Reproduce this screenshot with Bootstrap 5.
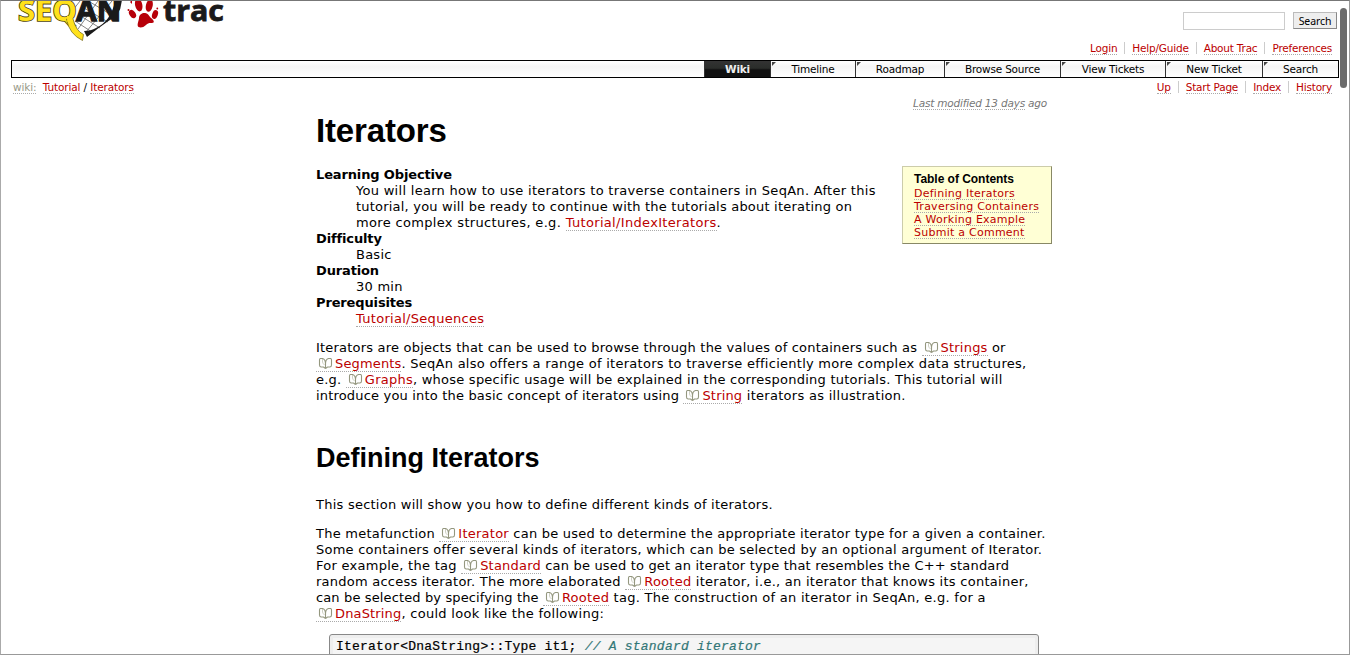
<!DOCTYPE html>
<html lang="en">
<head>
<meta charset="utf-8">
<title>Iterators</title>
<link href="https://cdn.jsdelivr.net/npm/bootstrap@5.3.0/dist/css/bootstrap.min.css" rel="stylesheet">
<style>
html,body{height:655px;overflow:hidden}
body{font-family:"DejaVu Sans",Verdana,sans-serif;font-size:13px;line-height:16px;color:#000;background:#fff}
.page-frame{height:655px;border:1px solid #777;border-left-color:#aaa;border-right-color:#999;border-bottom-color:#999}
a{color:#b00;text-decoration:none;border-bottom:1px dotted #aaa}
a:hover{color:#b00}
.masthead{height:59px;padding:0 13px 0 10px}
.logo-text{font-family:"Open Sans","Noto Sans",sans-serif;font-weight:700;font-size:29px}
.search-form{margin:11px -1px 12px 0}
.search-text{width:102px;height:18px;border:1px solid #ccc;padding:0;margin-right:8px}
.search-btn{width:44px;height:17px;border:1px solid #bbb;border-right-color:#888;border-bottom-color:#888;background:#eee;font:10.5px/14px "Noto Sans",sans-serif;letter-spacing:-.1px;padding:0;color:#000}
.linkbar{font-size:10.5px;line-height:12px;letter-spacing:-.2px}
.linkbar span{padding-left:7px}
.linkbar span+span{border-left:1px solid #ccc;margin-left:7px}
.linkbar a,.trail a{display:inline-block;line-height:12px}
.trail{font-size:10.5px;line-height:12px;letter-spacing:-.13px}
.trail .root{color:#998}
.context{padding:3px 17px 0 12px;height:19px}
.mainnav{height:18px;margin:0 10px;border:1px solid #000;background:linear-gradient(#fff,#f5f5f5 35%,#fff);font-size:10.5px;line-height:17px;letter-spacing:-.2px}
.tab{border-left:1px solid #333;text-align:center;position:relative}
.tab::before{content:"";position:absolute;left:1px;top:1px;border-top:4px solid #444;border-right:4px solid transparent}
.tab.here{background:linear-gradient(#333,#2a2d2a 45%,#111 55%,#111);color:#eee;font-weight:700}
.tab.here::before{display:none}
.w-wiki{width:66px}.w-time{width:85px}.w-road{width:89px}.w-browse{width:116px}.w-view{width:105px}.w-new{width:97px}.w-find{width:76px}
.article{width:736px;margin-left:315px}
.modified{font-size:10.5px;line-height:12px;letter-spacing:-.2px;color:#777;height:12px;padding-right:5px}
.modified a{color:#777}
h1,h2{font-family:"Liberation Sans",Arial,sans-serif;font-weight:700}
h1{font-size:33px;line-height:38px;letter-spacing:-.15px;margin:3px 0 0}
h2{font-size:27px;line-height:32px;margin:38px 0 0}
dl,p{margin:0}
.summary{padding-top:1px}
dt{letter-spacing:-.14px}
dd{margin:0 0 0 40px}
.para{margin-top:13px}
.objective{margin-top:16px}
.lead-in{margin-top:23px}
.ln{display:block;white-space:nowrap;letter-spacing:.24px}
.k13{letter-spacing:.13px}.k15{letter-spacing:.15px}.k18{letter-spacing:.18px}.k20{letter-spacing:.205px}.k27{letter-spacing:.265px}.k29{letter-spacing:.29px}.k33{letter-spacing:.33px}
.book{width:19px;height:11px;display:inline-block;vertical-align:-1px}
.toc{width:150px;height:78px;background:#ffffd5;border:1px solid #cca;border-right-color:#886;border-bottom-color:#886;padding:6px 0 0 11px;font-size:11px;line-height:13px;letter-spacing:.25px;white-space:nowrap}
.toc b{font:700 12px/13px "Liberation Sans",sans-serif;letter-spacing:-.03px;display:block;margin-bottom:1px}
.toc a{display:inline-block;height:13px;line-height:13px}
.codebox{margin:12px 13px 0 13px;border:1px solid #888;border-radius:3px 3px 0 0;background:#f5f5f5;box-shadow:inset 0 0 0 3px #eee;height:60px;padding:4px 6px;font:13px/16px "Liberation Mono",monospace;letter-spacing:.22px;-webkit-text-stroke:.2px;white-space:pre}
.codebox i{color:#377}
.thumb{position:absolute;right:2px;top:7px;width:7px;height:80px;border-radius:4px;background:#6b6b6b}
</style>
</head>
<body>
<svg width="0" height="0" class="position-absolute">
<symbol id="bk" viewBox="0 0 19 11"><path d="M9.500 10.800V5.500M6.500.5C8.500 1 9.500 3 9.500 6C9.500 3 10.500 1 12.500.5M7 .5H4.500Q3.500.5 3.500 2V7Q3.500 8.800 5 9H7.500L9.500 10.500M12 .5H14.500Q15.500.5 15.500 2V7Q15.500 8.800 14 9H11.500L9.500 10.500" fill="none" stroke="#94977f" stroke-width="1.100"/><path d="M6.500 1V4Q6.800 5.500 8.500 7" fill="none" stroke="#b9bba9" stroke-width=".7"/></symbol>
</svg>
<div class="page-frame position-relative overflow-hidden">
<header class="masthead d-flex justify-content-between">
<svg width="230" height="45" viewBox="11 1 230 45">
<path d="M75 21L92 32M79 15L100 28M84 8L108 22M90 2L115 17M80 1L73 10M98 1L78 29M112 1L86 32" stroke="#666" stroke-width=".8"/>
<path d="M121 5Q121 14 107 22Q97 29 87 37L84 31Q91 31 96 28Q111 21 115 1L122 0Z" fill="#1a1a1a"/>
<text class="logo-text" x="18" y="21" textLength="59" lengthAdjust="spacingAndGlyphs" fill="#ffe11b" stroke="#4d430c" stroke-width="1.600" paint-order="stroke">SEQ</text>
<path d="M66.500 19Q69 34 82.500 40.500L83.500 34.500Q76 31 73 19Z" fill="#ffe11b" stroke="#6b6018" stroke-width=".7"/>
<path d="M66.800 16H72.600V22H67.500Z" fill="#ffe11b"/>
<text class="logo-text" x="76" y="21" textLength="45" lengthAdjust="spacingAndGlyphs" fill="#1a1a1a" stroke="#1a1a1a" stroke-width="1.300">AN</text>
<g fill="#b70009"><path d="M138.500 27C136.500 25 138.800 21 139 18C139.200 15 141.500 12.500 145 13C148.500 13.500 149 16 151 18C154 20 155 23 152 23C149 22.800 148 23 146 25C143.500 27.500 140.500 28 138.500 27Z"/><ellipse cx="138.500" cy="5" rx="3.600" ry="6.500" transform="rotate(-12 138.500 4)"/><ellipse cx="149.500" cy="5.500" rx="3.400" ry="6.300" transform="rotate(12 149 4.500)"/><ellipse cx="132.500" cy="14" rx="3" ry="4.500" transform="rotate(-35 132.500 14)"/><ellipse cx="155" cy="14.500" rx="2.800" ry="4.500" transform="rotate(20 155 14.500)"/><circle cx="128.500" cy="10" r="1"/><circle cx="157.300" cy="8.500" r=".9"/><path d="M130 2l2-2v4z"/></g>
<text class="logo-text" x="163" y="21" textLength="61" lengthAdjust="spacingAndGlyphs" fill="#1a1a1a" stroke="#1a1a1a" stroke-width=".8">trac</text>
</svg>
<div class="d-flex flex-column align-items-end">
<form class="search-form d-flex"><input class="search-text" aria-label="Search"><button class="search-btn" type="button">Search</button></form>
<nav class="linkbar pe-1"><span><a href="#">Login</a></span><span><a href="#">Help/Guide</a></span><span><a href="#">About Trac</a></span><span><a href="#">Preferences</a></span></nav>
</div>
</header>
<nav class="mainnav d-flex justify-content-end"><div class="tab here w-wiki">Wiki</div><div class="tab w-time">Timeline</div><div class="tab w-road">Roadmap</div><div class="tab w-browse">Browse Source</div><div class="tab w-view">View Tickets</div><div class="tab w-new">New Ticket</div><div class="tab w-find">Search</div></nav>
<div class="context d-flex justify-content-between">
<div class="trail"><a href="#" class="root">wiki:</a>&nbsp; <a href="#">Tutorial</a> / <a href="#">Iterators</a></div>
<nav class="linkbar"><span><a href="#">Up</a></span><span><a href="#">Start Page</a></span><span><a href="#">Index</a></span><span><a href="#">History</a></span></nav>
</div>
<main class="article">
<div class="modified text-end fst-italic"><a href="#">Last modified</a> <a href="#">13 days</a> ago</div>
<h1>Iterators</h1>
<div class="objective d-flex justify-content-between align-items-start">
<dl class="summary">
<dt>Learning Objective</dt>
<dd><span class="ln k29">You will learn how to use iterators to traverse containers in SeqAn. After this</span><span class="ln k20">tutorial, you will be ready to continue with the tutorials about iterating on</span><span class="ln k33">more complex structures, e.g. <a href="#">Tutorial/IndexIterators</a>.</span></dd>
<dt>Difficulty</dt><dd class="ln">Basic</dd>
<dt>Duration</dt><dd class="ln">30 min</dd>
<dt>Prerequisites</dt><dd class="ln k29"><a href="#">Tutorial/Sequences</a></dd>
</dl>
<aside class="toc"><b>Table of Contents</b><a href="#">Defining Iterators</a><br><a href="#">Traversing Containers</a><br><a href="#">A Working Example</a><br><a href="#">Submit a Comment</a></aside>
</div>
<p class="para">
<span class="ln k20">Iterators are objects that can be used to browse through the values of containers such as <a href="#"><svg class="book"><use href="#bk"/></svg>Strings</a> or</span>
<span class="ln k27"><a href="#" class="k15"><svg class="book"><use href="#bk"/></svg>Segments</a>. SeqAn also offers a range of iterators to traverse efficiently more complex data structures,</span>
<span class="ln">e.g. <a href="#"><svg class="book"><use href="#bk"/></svg>Graphs</a>, whose specific usage will be explained in the corresponding tutorials. This tutorial will</span>
<span class="ln k18">introduce you into the basic concept of iterators using <a href="#"><svg class="book"><use href="#bk"/></svg>String</a><span class="k29"> iterators as illustration.</span></span></p>
<h2>Defining Iterators</h2>
<p class="ln lead-in">This section will show you how to define different kinds of iterators.</p>
<p class="para">
<span class="ln">The metafunction <a href="#"><svg class="book"><use href="#bk"/></svg>Iterator</a> can be used to determine the appropriate iterator type for a given a container.</span>
<span class="ln">Some containers offer several kinds of iterators, which can be selected by an optional argument of Iterator.</span>
<span class="ln k20"><span class="k27">For example, the tag </span><a href="#"><svg class="book"><use href="#bk"/></svg>Standard</a><span class="k18"> can be used to get an iterator type that resembles the C++ standard</span></span>
<span class="ln">random access iterator. The more elaborated <a href="#"><svg class="book"><use href="#bk"/></svg>Rooted</a><span class="k27"> iterator, i.e., an iterator that knows its container,</span></span>
<span class="ln k27"><span class="k13">can be selected by specifying the </span><a href="#"><svg class="book"><use href="#bk"/></svg>Rooted</a> tag. The construction of an iterator in SeqAn, e.g. for a</span>
<span class="ln k29"><a href="#" class="k15"><svg class="book"><use href="#bk"/></svg>DnaString</a>, could look like the following:</span></p>
<div class="codebox">Iterator&lt;DnaString&gt;::Type it1; <i>// A standard iterator</i></div>
</main>
<div class="thumb"></div>
</div>
<script src="https://cdn.jsdelivr.net/npm/bootstrap@5.3.0/dist/js/bootstrap.bundle.min.js"></script>
</body>
</html>
